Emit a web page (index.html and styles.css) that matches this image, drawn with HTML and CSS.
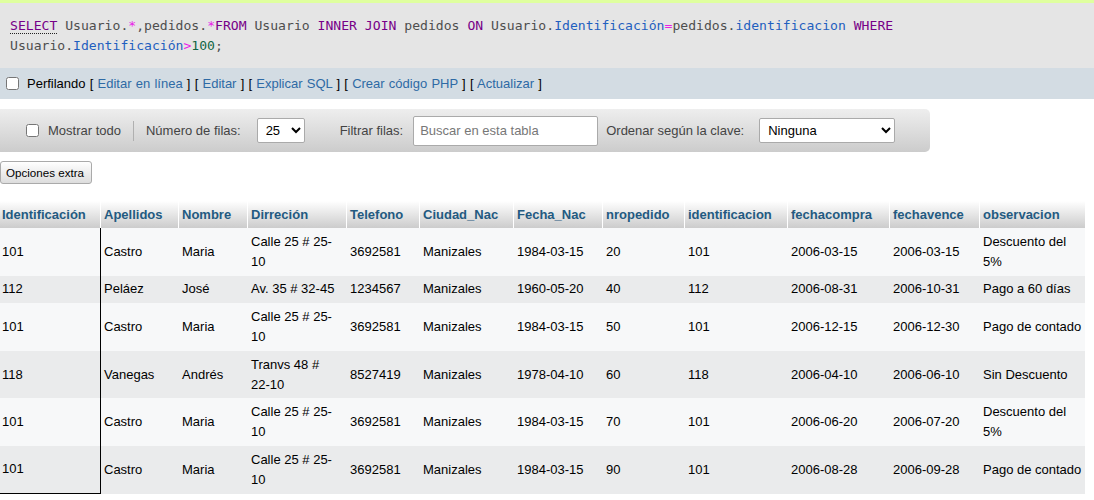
FILE: index.html
```html
<!DOCTYPE html>
<html lang="es">
<head>
<meta charset="utf-8">
<title>Resultado SQL</title>
<link rel="stylesheet" href="styles.css">
</head>
<body>
<div class="topbar"></div>
<div class="sql"><code><span class="kw doc">SELECT</span> <span class="tb">Usuario</span>.<span class="op">*</span>,<span class="tb">pedidos</span>.<span class="op">*</span><span class="kw">FROM</span> <span class="tb">Usuario</span> <span class="kw">INNER</span> <span class="kw">JOIN</span> <span class="tb">pedidos</span> <span class="kw">ON</span> <span class="tb">Usuario</span>.<span class="col">Identificación</span><span class="op">=</span><span class="tb">pedidos</span>.<span class="col">identificacion</span> <span class="kw">WHERE</span> <span class="tb">Usuario</span>.<span class="col">Identificación</span><span class="op">&gt;</span><span class="num">100</span>;</code></div>
<div class="tools">
  <input type="checkbox" class="chk">
  <span class="toollinks">Perfilando [ <a href="#">Editar en línea</a> ] [ <a href="#">Editar</a> ] [ <a href="#">Explicar SQL</a> ] [ <a href="#">Crear código PHP</a> ] [ <a href="#">Actualizar</a> ]</span>
</div>
<div class="nav">
  <input type="checkbox" class="chk nav-chk">
  <span class="lbl lbl-all">Mostrar todo</span>
  <span class="sep"></span>
  <span class="lbl lbl-rows">Número de filas:</span>
  <select class="sel sel-rows"><option>25</option></select>
  <span class="lbl lbl-filter">Filtrar filas:</span>
  <input type="text" class="search" placeholder="Buscar en esta tabla">
  <span class="lbl lbl-order">Ordenar según la clave:</span>
  <select class="sel sel-order"><option>Ninguna</option></select>
</div>
<button class="extra">Opciones extra</button>
<table class="data">
  <thead>
    <tr>
      <th class="w1">Identificación</th>
      <th class="w2">Apellidos</th>
      <th class="w3">Nombre</th>
      <th class="w4">Dirreción</th>
      <th class="w5">Telefono</th>
      <th class="w6">Ciudad_Nac</th>
      <th class="w7">Fecha_Nac</th>
      <th class="w8">nropedido</th>
      <th class="w9">identificacion</th>
      <th class="w10">fechacompra</th>
      <th class="w11">fechavence</th>
      <th class="w12">observacion</th>
    </tr>
  </thead>
  <tbody>
    <tr><td>101</td><td>Castro</td><td>Maria</td><td>Calle 25 # 25-10</td><td>3692581</td><td>Manizales</td><td>1984-03-15</td><td>20</td><td>101</td><td>2006-03-15</td><td>2006-03-15</td><td>Descuento del 5%</td></tr>
    <tr><td>112</td><td>Peláez</td><td>José</td><td>Av. 35 # 32-45</td><td>1234567</td><td>Manizales</td><td>1960-05-20</td><td>40</td><td>112</td><td>2006-08-31</td><td>2006-10-31</td><td>Pago a 60 días</td></tr>
    <tr><td>101</td><td>Castro</td><td>Maria</td><td>Calle 25 # 25-10</td><td>3692581</td><td>Manizales</td><td>1984-03-15</td><td>50</td><td>101</td><td>2006-12-15</td><td>2006-12-30</td><td>Pago de contado</td></tr>
    <tr><td>118</td><td>Vanegas</td><td>Andrés</td><td>Tranvs 48 # 22-10</td><td>8527419</td><td>Manizales</td><td>1978-04-10</td><td>60</td><td>118</td><td>2006-04-10</td><td>2006-06-10</td><td>Sin Descuento</td></tr>
    <tr><td>101</td><td>Castro</td><td>Maria</td><td>Calle 25 # 25-10</td><td>3692581</td><td>Manizales</td><td>1984-03-15</td><td>70</td><td>101</td><td>2006-06-20</td><td>2006-07-20</td><td>Descuento del 5%</td></tr>
    <tr><td>101</td><td>Castro</td><td>Maria</td><td>Calle 25 # 25-10</td><td>3692581</td><td>Manizales</td><td>1984-03-15</td><td>90</td><td>101</td><td>2006-08-28</td><td>2006-09-28</td><td>Pago de contado</td></tr>
  </tbody>
</table>
</body>
</html>
```
FILE: styles.css
```css
* { box-sizing: border-box; }
body {
  margin: 0;
  font-family: "Liberation Sans", Arial, sans-serif;
  font-size: 13px;
  color: #000;
  background: #fff;
}
.topbar { height: 3px; background: #dfff9f; }

.sql {
  background: #e5e5e5;
  padding: 13px 10px 12px;
  font-family: "DejaVu Sans Mono", monospace;
  font-size: 13.1px;
  line-height: 20px;
  color: #4e4e4e;
}
.sql code { font-family: inherit; }
.sql .kw { color: #770088; }
.sql .doc { border-bottom: 1px dotted #222; }
.sql .tb { color: #4e4e4e; }
.sql .op { color: #e91ee9; }
.sql .col { color: #1f5fbf; }
.sql .num { color: #116644; }

.tools {
  background: #d3dce3;
  height: 31px;
  display: flex;
  align-items: center;
  padding-left: 6px;
}
.chk { margin: 0; width: 13px; height: 13px; }
.toollinks { margin-left: 8px; word-spacing: 0.6px; }
.toollinks a { color: #2e6aa5; text-decoration: none; }

.nav {
  margin-top: 10px;
  width: 930px;
  height: 43px;
  display: flex;
  align-items: center;
  padding-left: 26px;
  background: linear-gradient(#eeeeee, #cccccc);
  border-radius: 0 5px 5px 0;
  color: #444;
}
.lbl { white-space: nowrap; }
.lbl-all { margin-left: 9px; }
.sep { width: 1px; height: 20px; background: #b0b0b0; margin-left: 12px; }
.lbl-rows { margin-left: 12px; }
.sel {
  font-family: "Liberation Sans", Arial, sans-serif;
  font-size: 13px;
  color: #000;
  height: 25px;
  background: #fff;
  border: 1px solid #aaa;
  border-radius: 2px;
  padding: 0 4px;
}
.sel-rows { margin-left: 16px; width: 48px; }
.lbl-filter { margin-left: 35px; }
.search {
  margin-left: 10px;
  width: 185px;
  height: 30px;
  border: 1px solid #aaa;
  border-radius: 2px;
  padding: 0 6px;
  font-family: "Liberation Sans", Arial, sans-serif;
  font-size: 13px;
  background: #fff;
}
.search::placeholder { color: #777; }
.lbl-order { margin-left: 8px; }
.sel-order { margin-left: 15px; width: 136px; }

.extra {
  display: block;
  margin: 9px 0 0 0;
  height: 23px;
  width: 92px;
  padding: 0 0 0 5px;
  font-family: "Liberation Sans", Arial, sans-serif;
  font-size: 11.6px;
  color: #000;
  text-align: left;
  background: linear-gradient(#ffffff, #dddddd);
  border: 1px solid #aaa;
  border-radius: 3px;
}

.data {
  margin-top: 17px;
  border-collapse: separate;
  border-spacing: 0;
  table-layout: fixed;
  width: 1085px;
}
.data th, .data td {
  padding: 3.5px 3px 3.5px 3px;
  line-height: 20px;
  text-align: left;
  vertical-align: middle;
  border-left: 1px solid transparent;
}
.data td { padding-top: 3.8px; padding-bottom: 3.8px; }
.data th {
  background: linear-gradient(#ffffff, #cccccc);
  color: #235a81;
  font-weight: bold;
  white-space: nowrap;
  border-left-color: #fff;
}
.data th:first-child, .data td:first-child { border-left: none; padding-left: 2px; }
.data td:nth-child(2) { border-left-color: #000; }
.data td:nth-child(4) { padding-right: 5px; }
.data tbody tr:nth-child(odd) { background: #f7f8f9; }
.data tbody tr:nth-child(even) { background: #eaebec; }
.data tbody tr:last-child td:first-child { border-bottom: 1px solid #000; }

.w1 { width: 100px; }
.w2 { width: 78px; }
.w3 { width: 69px; }
.w4 { width: 99px; }
.w5 { width: 73px; }
.w6 { width: 94px; }
.w7 { width: 89px; }
.w8 { width: 82px; }
.w9 { width: 103px; }
.w10 { width: 102px; }
.w11 { width: 90px; }
.w12 { width: 106px; }
```
